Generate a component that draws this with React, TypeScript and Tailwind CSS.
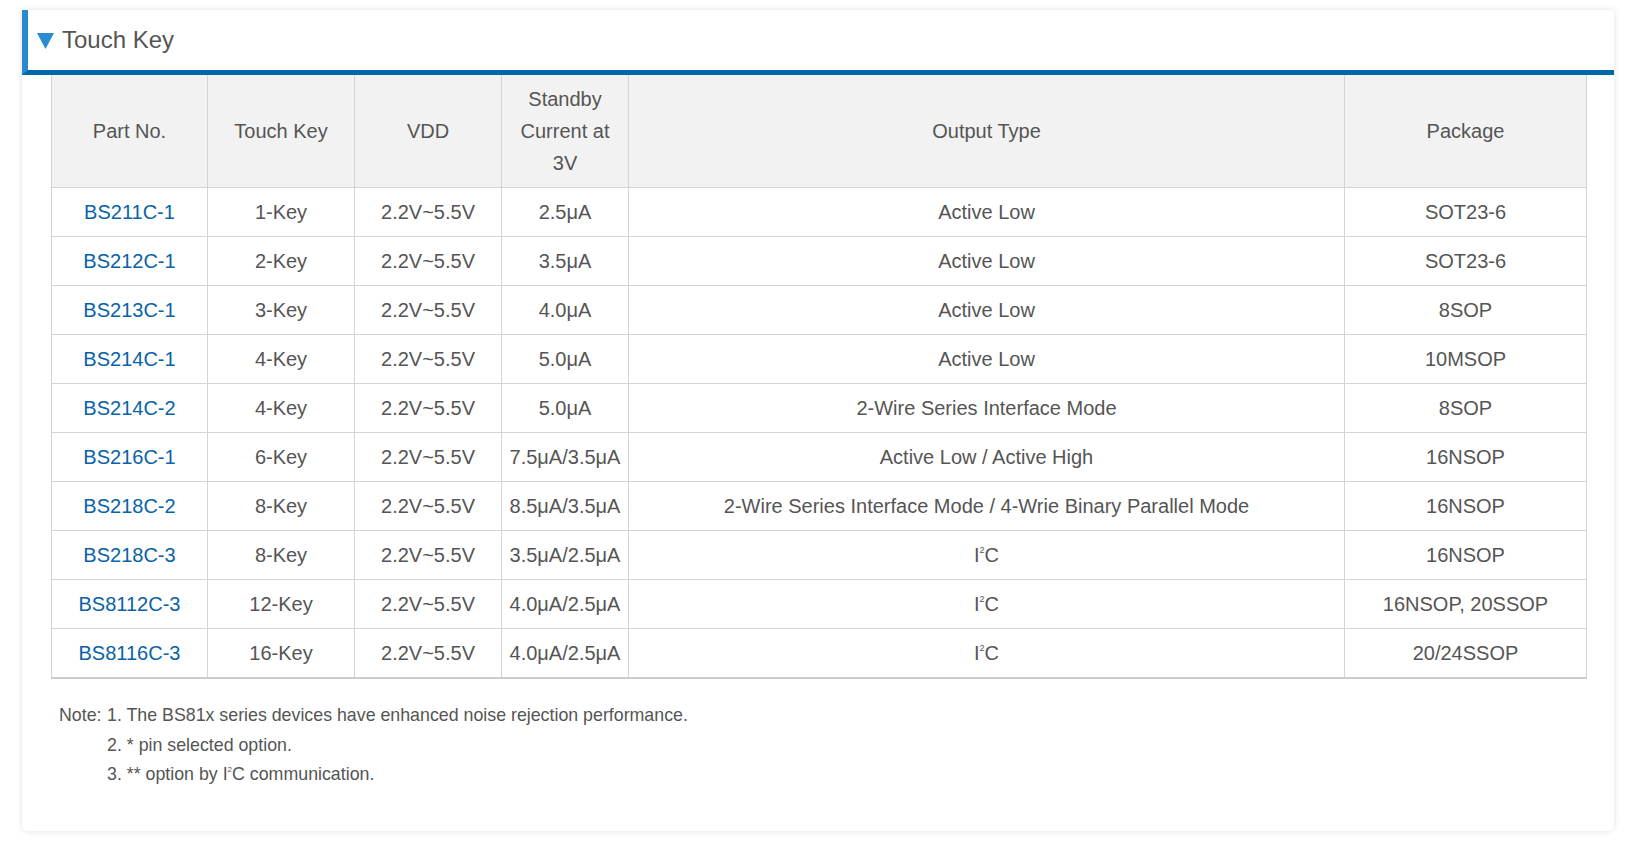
import React from "react";

type Row = { part: string; key: string; vdd: string; cur: string; out: React.ReactNode; pkg: string };

const I2C = (
  <span>
    I<sup className="text-[9px] leading-none relative top-[-9px]">2</sup>C
  </span>
);

const rows: Row[] = [
  { part: "BS211C-1", key: "1-Key", vdd: "2.2V~5.5V", cur: "2.5μA", out: "Active Low", pkg: "SOT23-6" },
  { part: "BS212C-1", key: "2-Key", vdd: "2.2V~5.5V", cur: "3.5μA", out: "Active Low", pkg: "SOT23-6" },
  { part: "BS213C-1", key: "3-Key", vdd: "2.2V~5.5V", cur: "4.0μA", out: "Active Low", pkg: "8SOP" },
  { part: "BS214C-1", key: "4-Key", vdd: "2.2V~5.5V", cur: "5.0μA", out: "Active Low", pkg: "10MSOP" },
  { part: "BS214C-2", key: "4-Key", vdd: "2.2V~5.5V", cur: "5.0μA", out: "2-Wire Series Interface Mode", pkg: "8SOP" },
  { part: "BS216C-1", key: "6-Key", vdd: "2.2V~5.5V", cur: "7.5μA/3.5μA", out: "Active Low / Active High", pkg: "16NSOP" },
  { part: "BS218C-2", key: "8-Key", vdd: "2.2V~5.5V", cur: "8.5μA/3.5μA", out: "2-Wire Series Interface Mode / 4-Wrie Binary Parallel Mode", pkg: "16NSOP" },
  { part: "BS218C-3", key: "8-Key", vdd: "2.2V~5.5V", cur: "3.5μA/2.5μA", out: I2C, pkg: "16NSOP" },
  { part: "BS8112C-3", key: "12-Key", vdd: "2.2V~5.5V", cur: "4.0μA/2.5μA", out: I2C, pkg: "16NSOP, 20SSOP" },
  { part: "BS8116C-3", key: "16-Key", vdd: "2.2V~5.5V", cur: "4.0μA/2.5μA", out: I2C, pkg: "20/24SSOP" },
];

const td = "border border-[#d4d4d4] py-2 px-1 text-center align-middle";

export default function App() {
  return (
    <div className="bg-white w-[1636px] min-h-[842px] pt-[10px] px-[22px] pb-[12px]" style={{ fontFamily: '"Liberation Sans", Arial, sans-serif' }}>
      <div className="bg-white rounded-b-md shadow-[0_0_6px_rgba(0,0,0,0.13)] pb-[41px]">
        <div className="h-[65px] border-l-[6px] border-l-[#2a8ad0] border-b-[5px] border-b-[#0068a8] flex items-center pl-[9px]">
          <svg width="17" height="16" viewBox="0 0 17 16" className="mr-[8px] mt-[1px]">
            <polygon points="0,0 17,0 8.5,16" fill="#2a8bd0" />
          </svg>
          <span className="text-[24px] text-[#555555] leading-none">Touch Key</span>
        </div>
        <div className="px-[29px] pr-[28px]">
          <table className="w-[1535px] border-collapse table-fixed text-[20px] leading-[32px] text-[#555555] border-b-2 border-b-[#cccccc]">
            <colgroup>
              <col className="w-[156px]" />
              <col className="w-[147px]" />
              <col className="w-[147px]" />
              <col className="w-[127px]" />
              <col className="w-[716px]" />
              <col className="w-[242px]" />
            </colgroup>
            <thead>
              <tr className="bg-[#f2f2f2]">
                <th className={`${td} font-normal border-t-0`}>Part No.</th>
                <th className={`${td} font-normal border-t-0`}>Touch Key</th>
                <th className={`${td} font-normal border-t-0`}>VDD</th>
                <th className={`${td} font-normal border-t-0 px-3`}>Standby Current at 3V</th>
                <th className={`${td} font-normal border-t-0`}>Output Type</th>
                <th className={`${td} font-normal border-t-0`}>Package</th>
              </tr>
            </thead>
            <tbody>
              {rows.map((r) => (
                <tr key={r.part}>
                  <td className={`${td} text-[#0a62a8]`}>{r.part}</td>
                  <td className={td}>{r.key}</td>
                  <td className={td}>{r.vdd}</td>
                  <td className={td}>{r.cur}</td>
                  <td className={td}>{r.out}</td>
                  <td className={td}>{r.pkg}</td>
                </tr>
              ))}
            </tbody>
          </table>
          <div className="mt-[22px] pl-[8px] text-[17.8px] leading-[29.5px] text-[#555555] flex">
            <div className="w-[48px] shrink-0">Note:</div>
            <div className="flex flex-col">
              <div>1. The BS81x series devices have enhanced noise rejection performance.</div>
              <div>2. * pin selected option.</div>
              <div>
                3. ** option by I<sup className="text-[8px] leading-none relative top-[-8px]">2</sup>C communication.
              </div>
            </div>
          </div>
        </div>
      </div>
    </div>
  );
}
